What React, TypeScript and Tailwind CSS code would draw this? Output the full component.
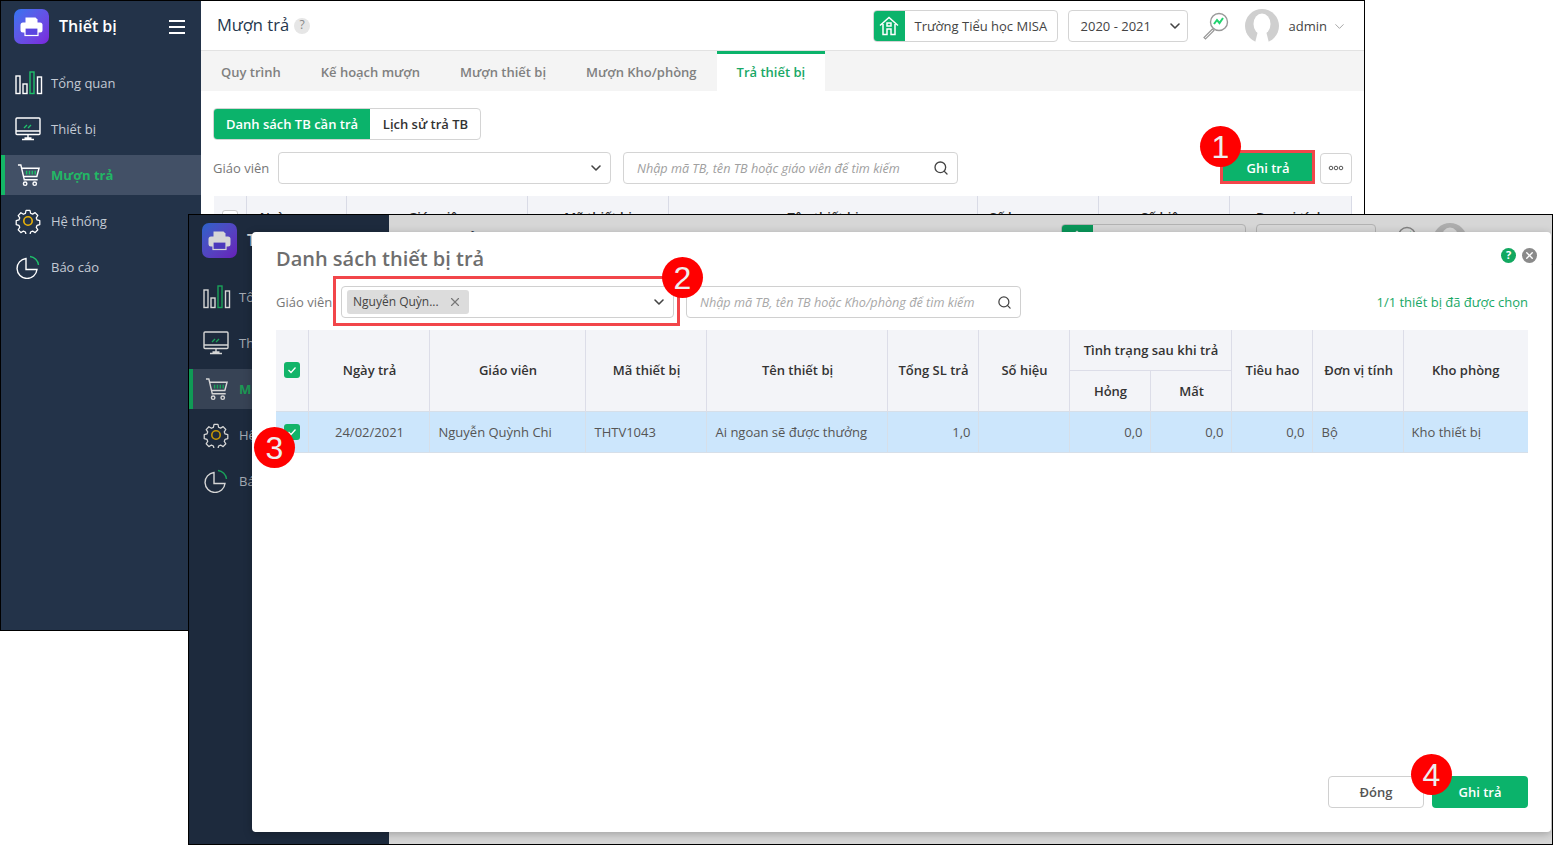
import type { ReactNode } from "react";
import { ChevronDown, Search, X } from "lucide-react";

function LogoIcon() {
  return (
    <div className="flex h-[35px] w-[35px] shrink-0 items-center justify-center rounded-[7px] bg-gradient-to-br from-[#2f74f0] to-[#7a22dc]">
      <svg width="23" height="21" viewBox="0 0 23 21">
        <path d="M5.5 1.5h10l2 2V7h-12z" fill="#fff" />
        <rect x="0.5" y="6.5" width="22" height="10" rx="2.5" fill="#fff" />
        <rect x="5" y="12" width="13" height="7.5" fill="#5b45e0" stroke="#fff" strokeWidth="1.2" />
      </svg>
    </div>
  );
}

function BarsIcon() {
  return (
    <svg className="ml-[1px]" width="28" height="24" viewBox="0 0 28 24" fill="none" strokeWidth="1.4">
      <rect x="1" y="5" width="4" height="17.5" stroke="#fff" />
      <rect x="8" y="13" width="4" height="9.5" stroke="#fff" />
      <rect x="15" y="1" width="4" height="21.5" stroke="#1fc16b" />
      <rect x="22.5" y="6" width="4" height="16.5" stroke="#fff" />
    </svg>
  );
}

function MonitorIcon() {
  return (
    <svg width="26" height="24" viewBox="0 0 26 24" fill="none" stroke="#fff" strokeWidth="1.4">
      <rect x="1" y="1" width="24" height="16.5" rx="1" />
      <path d="M1 14h24M13 17.5v3.5M7 22.5h12M9.5 21h7" />
      <path d="M9 11l3-3M13 11l3-3" stroke="#1fc16b" />
    </svg>
  );
}

function CartIcon() {
  return (
    <svg width="23" height="23" viewBox="0 0 24 24" fill="none" stroke="#fff" strokeWidth="1.5">
      <path d="M1 1h3l3.6 15.5h14" />
      <path d="M4.8 4.5H23l-2.3 8.5H6.8" />
      <path d="M10 7v4M13 7v4M16 7v4M19 7v4" stroke="#1fc16b" />
      <circle cx="8.5" cy="20.5" r="1.8" />
      <circle cx="18.5" cy="20.5" r="1.8" />
    </svg>
  );
}

function GearIcon() {
  return (
    <svg width="26" height="26" viewBox="0 0 26 26" fill="none" strokeWidth="1.4">
      <path
        stroke="#fff"
        strokeLinejoin="round"
        d="M10.8 1.2h4.4l.7 3.2 2.2 1 2.8-1.7 3 3.2-1.7 2.7.9 2.2 3 .8v4.4l-3 .8-.9 2.2 1.7 2.7-3 3.2-2.8-1.7-2.2 1-.7 3h-4.4l-.7-3-2.2-1-2.8 1.7-3-3.2 1.7-2.7-.9-2.2-3-.8v-4.4l3-.8.9-2.2L2.1 7l3-3.2 2.8 1.7 2.2-1z"
        transform="translate(1.3 1.3) scale(0.9)"
      />
      <circle cx="13" cy="13" r="4.2" stroke="#eab308" strokeWidth="1.6" />
    </svg>
  );
}

function PieIcon() {
  return (
    <svg width="24" height="24" viewBox="0 0 24 24" fill="none" strokeWidth="1.4">
      <path d="M10 3.5A10 10 0 1 0 21 14.5H10z" stroke="#fff" />
      <path d="M14 1.5a9.5 9.5 0 0 1 8.5 8.5" stroke="#1fc16b" />
    </svg>
  );
}

const menuItems = [
  { label: "Tổng quan", icon: <BarsIcon /> },
  { label: "Thiết bị", icon: <MonitorIcon /> },
  { label: "Mượn trả", icon: <CartIcon />, active: true },
  { label: "Hệ thống", icon: <GearIcon /> },
  { label: "Báo cáo", icon: <PieIcon /> },
];

function Sidebar() {
  return (
    <aside className="flex w-[200px] shrink-0 flex-col bg-[#233349]">
      <div className="flex h-[51px] items-center pl-[13px] pr-[16px]">
        <LogoIcon />
        <span className="ml-[10px] flex-1 pb-[2px] text-[16px] font-semibold text-white">Thiết bị</span>
        <div className="flex w-[16px] flex-col gap-[4px]">
          <div className="h-[2px] bg-white" />
          <div className="h-[2px] bg-white" />
          <div className="h-[2px] bg-white" />
        </div>
      </div>
      <nav className="mt-[11px] flex flex-col gap-[6px]">
        {menuItems.map((item) => (
          <div
            key={item.label}
            className={`flex h-[40px] items-center ${
              item.active ? "border-l-4 border-[#14b866] bg-[#425066]" : "border-l-4 border-transparent"
            }`}
          >
            <div className="flex w-[46px] justify-center">{item.icon}</div>
            <span
              className={`pt-[2px] text-[13px] ${
                item.active ? "font-bold text-[#22b765]" : "text-[#c3cad4]"
              }`}
            >
              {item.label}
            </span>
          </div>
        ))}
      </nav>
    </aside>
  );
}

function Header() {
  return (
    <header className="flex h-[50px] shrink-0 items-center border-b border-[#e2e2e2] bg-white pl-[16px] pr-[17px] pt-[1px]">
      <h1 className="pb-[2px] text-[16.5px] font-medium text-[#24364d]">Mượn trả</h1>
      <span className="ml-[5px] flex h-[16px] w-[16px] items-center justify-center rounded-full bg-[#e6e6e6] pb-[2px] text-[12px] text-[#888]">
        ?
      </span>
      <div className="ml-auto flex h-[32px] w-[185px] items-center overflow-hidden rounded border border-[#d4d4d4]">
        <div className="flex h-full w-[31px] items-center justify-center bg-[#0bb36b]">
          <svg width="20" height="20" viewBox="0 0 20 20" fill="none" stroke="#fff" strokeWidth="1.5">
            <path d="M1 9.5L10 1.5l9 8M4 8v10.5h4V13h4v5.5h4V8" />
            <rect x="8" y="7" width="4" height="3" />
          </svg>
        </div>
        <span className="pl-[10px] pt-[1px] text-[13px] text-[#444]">Trường Tiểu học MISA</span>
      </div>
      <div className="ml-[10px] flex h-[32px] w-[120px] items-center justify-between rounded border border-[#d4d4d4] pl-[12px] pr-[4px] text-[13px] text-[#444]">
        <span className="pt-[2px]">2020 - 2021</span>
        <ChevronDown size={16} strokeWidth={2.4} color="#444" />
      </div>
      <svg className="ml-[13px]" width="28" height="28" viewBox="0 0 28 28" fill="none">
        <circle cx="18" cy="10" r="8.5" stroke="#999" strokeWidth="1.4" />
        <path d="M13 12l3-4 2.5 3 3.5-5" stroke="#22d36f" strokeWidth="2" />
        <path d="M11.5 17L3 25.5l1.5 1.5 8.500-8.500z" stroke="#999" strokeWidth="1.2" fill="#fff" />
      </svg>
      <svg className="ml-[16px]" width="34" height="34" viewBox="0 0 34 34">
        <circle cx="17" cy="17" r="17" fill="#cfcfcf" />
        <ellipse cx="17" cy="15" rx="8.5" ry="10.5" fill="#fff" />
        <path d="M13 22h8l3 12H10z" fill="#fff" />
      </svg>
      <span className="ml-[10px] pt-[2px] text-[13px] text-[#444]">admin</span>
      <ChevronDown className="ml-[5px]" size={15} strokeWidth={1.2} color="#888" />
    </header>
  );
}

const tabs = ["Quy trình", "Kế hoạch mượn", "Mượn thiết bị", "Mượn Kho/phòng", "Trả thiết bị"];

function Tabs() {
  return (
    <div className="flex h-[40px] shrink-0 bg-[#f4f4f4]">
      {tabs.map((tab, i) =>
        i === tabs.length - 1 ? (
          <div
            key={tab}
            className="flex items-center border-t-[3px] border-[#0bb36b] bg-white px-5 text-[13px] font-semibold text-[#19a866]"
          >
            {tab}
          </div>
        ) : (
          <div key={tab} className="flex items-center px-5 pt-[4px] text-[13px] font-semibold text-[#808080]">
            {tab}
          </div>
        )
      )}
    </div>
  );
}

const backColumns = [
  { label: "", width: "w-[33px]" },
  { label: "Ngày mượn", width: "w-[100px]" },
  { label: "Giáo viên", width: "w-[181px]" },
  { label: "Mã thiết bị", width: "w-[141px]" },
  { label: "Tên thiết bị", width: "w-[309px]" },
  { label: "Số lượng mượn", width: "w-[121px]" },
  { label: "Số hiệu", width: "w-[131px]" },
  { label: "Đơn vị tính", width: "w-[122px]" },
];

function ReturnPage() {
  return (
    <div className="flex-1 overflow-hidden bg-white px-[12px] pt-[17px]">
      <div className="flex h-[32px] w-[268px] overflow-hidden rounded border border-[#d4d4d4] text-[13px] font-semibold">
        <div className="flex w-[156px] items-center justify-center bg-[#0bb36b] pt-[2px] text-white">Danh sách TB cần trả</div>
        <div className="flex flex-1 items-center justify-center pl-[1px] pt-[2px] text-[#333]">Lịch sử trả TB</div>
      </div>
      <div className="mt-[12px] flex h-[32px] items-center">
        <span className="w-[65px] pt-[2px] text-[13px] text-[#777]">Giáo viên</span>
        <div className="flex h-full w-[333px] items-center justify-end rounded border border-[#d4d4d4] pr-[6px]">
          <ChevronDown size={16} strokeWidth={2.4} color="#444" />
        </div>
        <div className="ml-[12px] flex h-full w-[335px] items-center justify-between rounded border border-[#d4d4d4] pl-[13px] pr-[8px]">
          <span className="text-[12.65px] italic text-[#a0a0a0]">Nhập mã TB, tên TB hoặc giáo viên để tìm kiếm</span>
          <Search size={16} strokeWidth={2} color="#444" />
        </div>
        <button className="ml-auto flex h-[30px] w-[92px] items-center justify-center rounded-[2px] bg-[#0bb36b] pt-[2px] text-[13px] font-semibold text-white">
          Ghi trả
        </button>
        <button className="ml-[6px] flex h-[31px] w-[32px] items-center justify-center rounded border border-[#d4d4d4] text-[#555]">
          <svg width="16" height="6" viewBox="0 0 16 6" fill="none" stroke="#555">
            <circle cx="3" cy="3" r="1.8" />
            <circle cx="8" cy="3" r="1.8" />
            <circle cx="13" cy="3" r="1.8" />
          </svg>
        </button>
      </div>
      <div className="ml-[1px] mt-[12px] flex h-[44px] bg-[#f3f4f8]">
        {backColumns.map((col, i) => (
          <div
            key={i}
            className={`flex ${col.width} shrink-0 items-center justify-center border-r border-[#d9dbe6] text-[13px] font-semibold text-[#333]`}
          >
            {i === 0 ? <div className="h-[16px] w-[16px] rounded-[3px] border border-[#ccc] bg-white" /> : col.label}
          </div>
        ))}
      </div>
    </div>
  );
}

function Badge({ n, className }: { n: number; className: string }) {
  return (
    <div
      className={`absolute z-20 flex h-[41px] w-[41px] items-center justify-center rounded-full bg-[#ff0000] font-['Liberation_Sans',sans-serif] text-[32px] text-[#eeeeee] ${className}`}
    >
      {n}
    </div>
  );
}

function Check() {
  return (
    <div className="mx-auto flex h-[16px] w-[16px] items-center justify-center rounded-[3px] bg-[#12b469]">
      <svg width="10" height="8" viewBox="0 0 10 8" fill="none" stroke="#fff" strokeWidth="1.3">
        <path d="M1.5 4l2.5 2.5L8.5 1.5" />
      </svg>
    </div>
  );
}

const th = "border-r border-[#dcdde8] pl-[2px] text-center align-middle text-[13px] font-semibold text-[#333]";
const td = "border-r border-[#d6dfe9] pl-[9px] pr-[7px] pt-[2px] align-middle text-[13px] text-[#555]";

function ReturnTable() {
  return (
    <table className="w-[1252px] table-fixed border-collapse">
      <colgroup>
        <col className="w-[32px]" />
        <col className="w-[121px]" />
        <col className="w-[156px]" />
        <col className="w-[121px]" />
        <col className="w-[181px]" />
        <col className="w-[91px]" />
        <col className="w-[91px]" />
        <col className="w-[81px]" />
        <col className="w-[81px]" />
        <col className="w-[81px]" />
        <col className="w-[91px]" />
        <col className="w-[125px]" />
      </colgroup>
      <thead className="bg-[#f3f4f8]">
        <tr className="h-[40px]">
          <th rowSpan={2} className="border-r border-[#dcdde8] align-middle">
            <Check />
          </th>
          <th rowSpan={2} className={th}>Ngày trả</th>
          <th rowSpan={2} className={th}>Giáo viên</th>
          <th rowSpan={2} className={th}>Mã thiết bị</th>
          <th rowSpan={2} className={th}>Tên thiết bị</th>
          <th rowSpan={2} className={th}>Tổng SL trả</th>
          <th rowSpan={2} className={th}>Số hiệu</th>
          <th colSpan={2} className={`${th} border-b pt-[2px]`}>Tình trạng sau khi trả</th>
          <th rowSpan={2} className={th}>Tiêu hao</th>
          <th rowSpan={2} className={th}>Đơn vị tính</th>
          <th rowSpan={2} className="text-center align-middle text-[13px] font-semibold text-[#333]">Kho phòng</th>
        </tr>
        <tr className="h-[41px]">
          <th className={`${th} pt-[2px]`}>Hỏng</th>
          <th className={`${th} pt-[2px]`}>Mất</th>
        </tr>
      </thead>
      <tbody>
        <tr className="h-[41px] border-y border-[#d6dfe9] bg-[#cce6fc]">
          <td className="border-r border-[#d6dfe9] align-middle">
            <Check />
          </td>
          <td className={`${td} text-center`}>24/02/2021</td>
          <td className={td}>Nguyễn Quỳnh Chi</td>
          <td className={td}>THTV1043</td>
          <td className={td}>Ai ngoan sẽ được thưởng</td>
          <td className={`${td} text-right`}>1,0</td>
          <td className={td} />
          <td className={`${td} text-right`}>0,0</td>
          <td className={`${td} text-right`}>0,0</td>
          <td className={`${td} text-right`}>0,0</td>
          <td className={td}>Bộ</td>
          <td className="pl-[8px] pr-[8px] pt-[2px] align-middle text-[13px] text-[#555]">Kho thiết bị</td>
        </tr>
      </tbody>
    </table>
  );
}

function ReturnModal() {
  return (
    <div className="absolute left-[63px] top-[17px] z-10 flex h-[600px] w-[1299px] flex-col rounded-[4px] bg-white pb-[24px] pl-[24px] pr-[23px] pt-[12px] shadow-[0_2px_8px_rgba(0,0,0,0.25)]">
      <div className="flex items-center">
        <h2 className="text-[20px] font-semibold text-[#6e6e6e]">Danh sách thiết bị trả</h2>
        <div className="-mr-[9px] ml-auto flex items-center gap-[6px] pb-[8px]">
          <span className="flex h-[15px] w-[15px] items-center justify-center rounded-full bg-[#12a860] text-[11px] font-bold text-white">
            ?
          </span>
          <span className="flex h-[15px] w-[15px] items-center justify-center rounded-full bg-[#8a8a8a]">
            <X size={11} strokeWidth={3} color="#fff" />
          </span>
        </div>
      </div>
      <div className="mt-[12px] flex h-[32px] items-center">
        <span className="w-[65px] pt-[2px] text-[13px] text-[#777]">Giáo viên</span>
        <div className="flex h-full w-[333px] items-center rounded border border-[#d0d0d0] pl-[5px] pr-[6px]">
          <div className="flex h-[24px] w-[122px] items-center rounded-[3px] bg-[#dcdcdc] pl-[6px] text-[12px] text-[#444]">
            Nguyễn Quỳn...
            <X className="ml-[9px]" size={14} strokeWidth={2} color="#777" />
          </div>
          <ChevronDown className="ml-auto" size={16} strokeWidth={2.4} color="#444" />
        </div>
        <div className="ml-[12px] flex h-full w-[335px] items-center justify-between rounded border border-[#d0d0d0] pl-[13px] pr-[8px]">
          <span className="text-[12.65px] italic text-[#a8a8a8]">Nhập mã TB, tên TB hoặc Kho/phòng để tìm kiếm</span>
          <Search size={15} strokeWidth={2} color="#444" />
        </div>
        <span className="ml-auto pt-[2px] text-[13px] text-[#19a866]">1/1 thiết bị đã được chọn</span>
      </div>
      <div className="mt-[12px] flex-1">
        <ReturnTable />
      </div>
      <div className="flex justify-end gap-[8px] text-[13px] font-semibold">
        <button className="h-[32px] w-[96px] rounded border border-[#d0d0d0] bg-white pt-[1px] text-[#555]">Đóng</button>
        <button className="h-[32px] w-[96px] rounded bg-[#0bb36b] pt-[1px] text-white">Ghi trả</button>
      </div>
    </div>
  );
}

function AppWindow({ className, children }: { className: string; children?: ReactNode }) {
  return (
    <div className={`absolute flex h-[631px] w-[1365px] border border-black bg-white ${className}`}>
      <Sidebar />
      <main className="flex min-w-0 flex-1 flex-col">
        <Header />
        {/* the front window's page lies fully under its modal */}
        {!children && <Tabs />}
        {!children && <ReturnPage />}
      </main>
      {children}
    </div>
  );
}

export default function App() {
  return (
    <div className="relative h-[845px] w-[1553px] overflow-hidden bg-white font-['Open_Sans',sans-serif]">
      <AppWindow className="left-0 top-0" />
      {/* red highlight round the back window's button */}
      <div className="absolute left-[1220px] top-[150px] h-[34px] w-[95px] border-[3px] border-[#f2464a]" />

      <AppWindow className="left-[188px] top-[214px]">
        <div className="absolute inset-0 bg-black/16" />
        <ReturnModal />
      </AppWindow>

      {/* annotations */}
      <div className="absolute left-[333px] top-[276px] z-20 h-[50px] w-[347px] border-[3px] border-[#f2464a]" />
      <Badge n={1} className="left-[1200px] top-[126px]" />
      <Badge n={2} className="left-[662px] top-[257px]" />
      <Badge n={3} className="left-[254px] top-[427px]" />
      <Badge n={4} className="left-[1411px] top-[754px]" />
    </div>
  );
}
